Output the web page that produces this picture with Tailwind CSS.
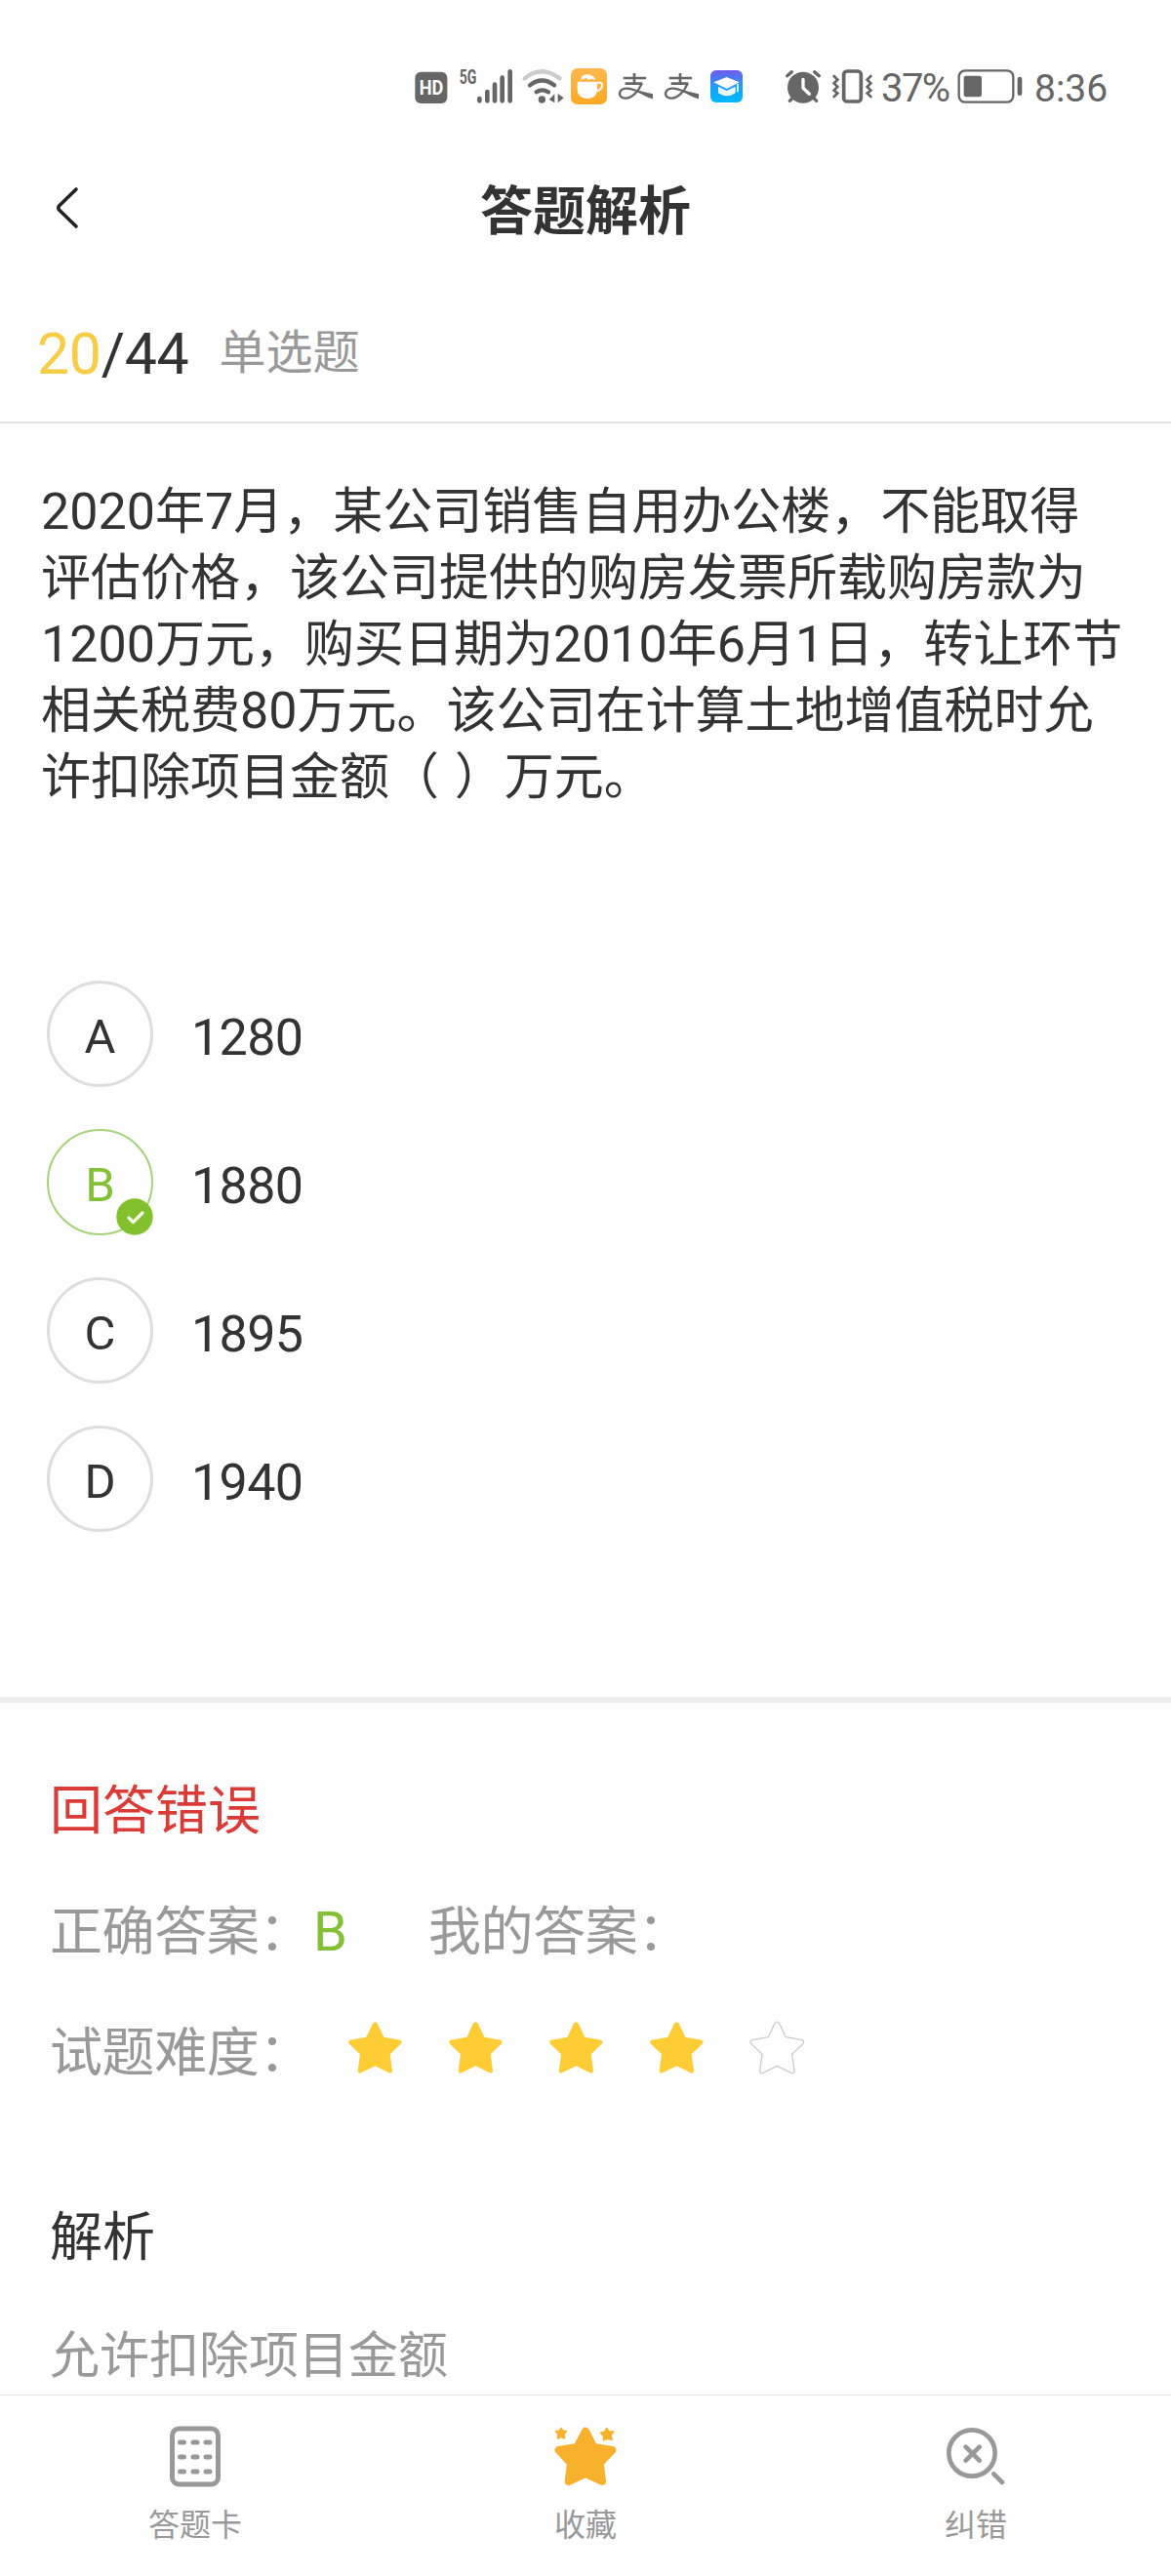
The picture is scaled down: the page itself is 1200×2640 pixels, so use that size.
<!DOCTYPE html>
<html lang="zh-CN">
<head>
    <meta charset="UTF-8">
    <meta name="viewport" content="width=device-width, initial-scale=1.0">
    <title>答题解析</title>
    <script src="https://cdn.jsdelivr.net/npm/@tailwindcss/browser@4"></script>
    <style>
        body { font-family: Roboto, 'Noto Sans CJK SC', sans-serif; }
    </style>
</head>
<body class="bg-[#fefefe] text-[#333] w-[1200px] h-[2640px] overflow-hidden flex flex-col">

    <!-- Shared shapes -->
    <svg class="hidden">
        <symbol id="star" viewBox="48 62 171 165">
            <path d="M126 70Q133 61 140 70L160 112L209 121Q219 124 212 133L179 165L186 216Q185 226 176 222L133 201L90 222Q81 226 80 216L87 165L54 133Q47 124 57 121L106 112Z"/>
        </symbol>
        <symbol id="alipay" viewBox="648 60 141 120">
            <g fill="none" stroke="#666" stroke-width="8">
                <path d="M686 90H756M720 75V106M692 107H745"/>
                <path d="M743 107C734 130 712 152 692 152C676 152 670 138 680 127C696 112 730 132 776 147" stroke-width="7"/>
            </g>
            <path d="M724 127L777 139V154C760 150 742 141 724 127Z" fill="#666"/>
        </symbol>
    </svg>

    <!-- Status bar -->
    <div class="h-[140px] shrink-0 pt-[70px] pl-[425px] flex text-[#666]">
        <svg class="w-[43px] h-10 shrink-0" viewBox="45 60 129 120">
            <rect x="46" y="71" width="99" height="97" rx="18" fill="#666"/>
            <text x="96" y="141" text-anchor="middle" textLength="74" lengthAdjust="spacingAndGlyphs" font-family="Roboto" font-size="60" font-weight="700" fill="#fff">HD</text>
        </svg>
        <svg class="w-[63px] h-10 shrink-0 overflow-visible" viewBox="174 60 189 120">
            <text x="182" y="109" textLength="53" lengthAdjust="spacingAndGlyphs" font-family="Roboto" font-size="60" font-weight="700" fill="#666">5G</text>
            <path d="M244 153V160M268 132V160M291 110V160M314 89V160M338 70V160" stroke="#666" stroke-width="14" stroke-linecap="round"/>
        </svg>
        <svg class="w-[50px] h-10 shrink-0" viewBox="363 60 150 120" fill="none" stroke-linecap="round" stroke-width="13">
            <path d="M383 91Q436 49 490 91" stroke="#ccc"/>
            <path d="M399 112Q436 83 474 112M419 133Q436 121 456 133" stroke="#666"/>
            <circle cx="436" cy="156" r="11" fill="#666"/>
            <path d="M475 139V166L458 156ZM485 138V166L503 151Z" fill="#666"/>
        </svg>
        <svg class="w-[45px] h-10 shrink-0" viewBox="513 60 135 120">
            <defs><linearGradient id="cup" x2="0" y2="1"><stop stop-color="#ffb84d"/><stop offset="1" stop-color="#fea925"/></linearGradient></defs>
            <rect x="525" y="60" width="111" height="111" rx="20" fill="url(#cup)"/>
            <path d="M545 101H606V124C606 143 594 153 576 153C557 153 545 143 545 124Z" fill="#fff"/>
            <path d="M606 105C625 98 628 120 606 130" fill="none" stroke="#fff" stroke-width="6"/>
            <path d="M556 96C557 84 565 79 576 79C589 79 597 87 601 96L588 92L580 96L572 90Z" fill="#fff"/>
        </svg>
        <svg class="w-[47px] h-10 shrink-0"><use href="#alipay"/></svg>
        <svg class="w-[47px] h-10 shrink-0"><use href="#alipay"/></svg>
        <svg class="w-[50px] h-10 shrink-0" viewBox="930 60 150 120">
            <defs><linearGradient id="edu" x2="0" y2="1"><stop stop-color="#7359ec"/><stop offset=".55" stop-color="#16a3fb"/><stop offset="1" stop-color="#00b8ff"/></linearGradient></defs>
            <rect x="954" y="66" width="99" height="99" rx="17" fill="url(#edu)"/>
            <path d="M1004 87L1043 103L1004 123L964 103Z" fill="#fff"/>
            <path d="M978 116L1004 129L1031 116V136Q1005 154 978 136Z" fill="#e9f7ff"/>
            <path d="M1038 108V133" stroke="#fff" stroke-width="5"/>
        </svg>

        <svg class="w-12 h-10 shrink-0 ml-[30px]" viewBox="60 60 144 120" fill="none" stroke-linecap="round">
            <circle cx="129" cy="119" r="48" fill="#666"/>
            <path d="M80 83L94 71M178 83L164 71" stroke="#666" stroke-width="10"/>
            <path d="M88 160L98 150M170 160L160 150" stroke="#666" stroke-width="10"/>
            <path d="M129 94V121L148 139" stroke="#fff" stroke-width="10" stroke-linejoin="round"/>
        </svg>
        <svg class="w-[51px] h-10 shrink-0" viewBox="204 60 153 120" fill="none" stroke="#666" stroke-linecap="round">
            <rect x="254" y="69" width="53" height="93" rx="10" stroke-width="11"/>
            <path d="M224 84L235 95L224 106L235 117L224 128L235 137L224 147M337 84L326 95L337 106L326 117L337 128L326 137L337 147" stroke-width="8"/>
        </svg>
        <div class="w-[81px] shrink-0 pl-[4px] text-[40px] leading-[42px] tracking-[-1.6px] whitespace-nowrap">37%</div>
        <svg class="w-[70px] h-10 shrink-0" viewBox="600 60 210 120" fill="none" stroke="#666">
            <rect x="608" y="67" width="167" height="97" rx="19" stroke-width="7"/>
            <rect x="623" y="83" width="55" height="65" rx="7" fill="#666" stroke="none"/>
            <path d="M795 93V137" stroke-width="14" stroke-linecap="round"/>
        </svg>
        <div class="shrink-0 pl-[10px] text-[39px] leading-[42px] whitespace-nowrap">8:36</div>
    </div>

    <!-- Header -->
    <header class="h-[154px] shrink-0 relative flex items-center justify-center">
        <svg class="absolute left-[54px] w-[30px] h-[50px] top-[48px]" viewBox="0 0 30 50" fill="none" stroke="#222" stroke-width="3.6" stroke-linecap="round" stroke-linejoin="round">
            <path d="M24 6L6.5 23Q5 25 6.5 27L24 44"/>
        </svg>
        <h1 class="text-[54px] font-bold leading-[80px] pt-[2px]">答题解析</h1>
    </header>

    <!-- Progress -->
    <div class="h-[140px] shrink-0 flex items-start pl-[38px] pt-[34px] border-b-2 border-[#e1e1e1] leading-[70px]">
        <div class="text-[59px] tracking-[-0.3px]"><span class="text-[#f8cd46]">20</span>/44</div>
        <div class="ml-[31px] text-[48px] text-[#999] -mt-px">单选题</div>
    </div>

    <!-- Question -->
    <p class="h-[571px] shrink-0 pt-[57px] pl-[42px] text-[51px] leading-[68px] whitespace-nowrap">
        <span class="text-[52px]">2020</span>年<span class="text-[52px]">7</span>月，某公司销售自用办公楼，不能取得<br>
        评估价格，该公司提供的购房发票所载购房款为<br>
        <span class="text-[52px]">1200</span>万元，购买日期为<span class="text-[52px]">2010</span>年<span class="text-[52px]">6</span>月<span class="text-[52px]">1</span>日，转让环节<br>
        相关税费<span class="text-[52px]">80</span>万元。该公司在计算土地增值税时允<br>
        许扣除项目金额（<span class="tracking-[3px]"> </span>）万元。
    </p>

    <!-- Options -->
    <ul class="h-[734px] shrink-0 pl-12 flex flex-col gap-[43px] text-[52px]">
        <li class="h-[109px] flex items-center gap-[39px]">
            <span class="w-[109px] h-[109px] rounded-full border-3 border-[#ddd] flex items-center justify-center text-[49px] pt-[6px]">A</span>
            <span class="pt-[9px] tracking-[-0.6px]">1280</span>
        </li>
        <li class="h-[109px] flex items-center gap-[39px]">
            <span class="relative w-[109px] h-[109px] rounded-full border-2 border-[#a5d377] flex items-center justify-center text-[49px] pt-[6px] text-[#83c034]">B
                <svg class="absolute -right-[2px] -bottom-[2px] w-[38px] h-[38px]" viewBox="0 0 38 38" fill="none">
                    <circle cx="19" cy="19" r="18.7" fill="#82c02d"/>
                    <path d="M13 20L17.5 24.5L27 15" stroke="#f3fae8" stroke-width="3.2" stroke-linecap="round" stroke-linejoin="round"/>
                </svg>
            </span>
            <span class="pt-[9px] tracking-[-0.6px]">1880</span>
        </li>
        <li class="h-[109px] flex items-center gap-[39px]">
            <span class="w-[109px] h-[109px] rounded-full border-3 border-[#ddd] flex items-center justify-center text-[49px] pt-[6px]">C</span>
            <span class="pt-[9px] tracking-[-0.6px]">1895</span>
        </li>
        <li class="h-[109px] flex items-center gap-[39px]">
            <span class="w-[109px] h-[109px] rounded-full border-3 border-[#ddd] flex items-center justify-center text-[49px] pt-[6px]">D</span>
            <span class="pt-[9px] tracking-[-0.6px]">1940</span>
        </li>
    </ul>

    <!-- Result and analysis -->
    <section class="h-[715px] shrink-0 border-t-6 border-[#ededed] pl-[51px] pt-[72px] text-[54px] leading-[80px] text-[#999] whitespace-nowrap">
        <div class="text-[#dc3a37]">回答错误</div>
        <div class="mt-[44px] flex">
            <div class="w-[270px] tracking-[-0.4px]">正确答案：</div>
            <div class="w-[118px] text-[56px] text-[#83c034] -mt-px">B</div>
            <div class="tracking-[-0.4px]">我的答案：</div>
        </div>
        <div class="mt-[44px] flex">
            <div class="w-[305px] tracking-[-0.4px]">试题难度：</div>
            <div class="flex gap-[46px] pt-[6px] text-[#fecc35]">
                <svg class="w-[57px] h-[55px]" fill="currentColor"><use href="#star"/></svg>
                <svg class="w-[57px] h-[55px]" fill="currentColor"><use href="#star"/></svg>
                <svg class="w-[57px] h-[55px]" fill="currentColor"><use href="#star"/></svg>
                <svg class="w-[57px] h-[55px]" fill="currentColor"><use href="#star"/></svg>
                <svg class="w-[57px] h-[55px]" fill="none" stroke="#ccc" stroke-width="4"><use href="#star"/></svg>
            </div>
        </div>
        <h2 class="mt-[109px] text-[#333]">解析</h2>
        <p class="mt-[41px] text-[51px]">允许扣除项目金额</p>
    </section>

    <!-- Bottom bar -->
    <nav class="flex-1 border-t border-[#e0e0e0] grid grid-cols-3 text-[32px] leading-[48px] text-[#999]">
        <div class="flex flex-col items-center pt-[30px]">
            <svg class="w-[54px] h-16" viewBox="0 0 54 64" fill="none" stroke="#999" stroke-linecap="round">
                <rect x="3.5" y="4" width="47" height="57" rx="7" stroke-width="5"/>
                <path d="M11.5 18H15.5M25 18H29M38 18H42M11.5 33H15.5M25 33H29M38 33H42M11.5 48H15.5M25 48H29M38 48H42" stroke-width="5"/>
            </svg>
            <div class="mt-[15px]">答题卡</div>
        </div>
        <div class="flex flex-col items-center pt-[30px]">
            <svg class="w-16 h-16" viewBox="82 138 192 192" fill="#f8b12c" stroke="#f8b12c" stroke-linejoin="round">
                <path d="M178 158L203 207L260 216L222 256L229 312L178 288L126 312L133 256L96 216L152 207Z" stroke-width="24"/>
                <path d="M103 148L108 156L120 158L112 167L114 180L103 176L92 180L94 167L86 158L98 156Z" stroke-width="4"/>
                <path d="M243 148L249 158L265 159L256 170L260 184L246 181L233 186L234 173L224 163L237 159Z" stroke-width="4"/>
            </svg>
            <div class="mt-[15px]">收藏</div>
        </div>
        <div class="flex flex-col items-center pt-[30px]">
            <svg class="w-16 h-16" viewBox="1284 138 192 192" fill="none" stroke="#999" stroke-linecap="round">
                <circle cx="1368" cy="225" r="71" stroke-width="14"/>
                <path d="M1349 206L1391 248M1391 206L1349 248M1435 289L1461 315" stroke-width="14"/>
            </svg>
            <div class="mt-[15px]">纠错</div>
        </div>
    </nav>
</body>
</html>
